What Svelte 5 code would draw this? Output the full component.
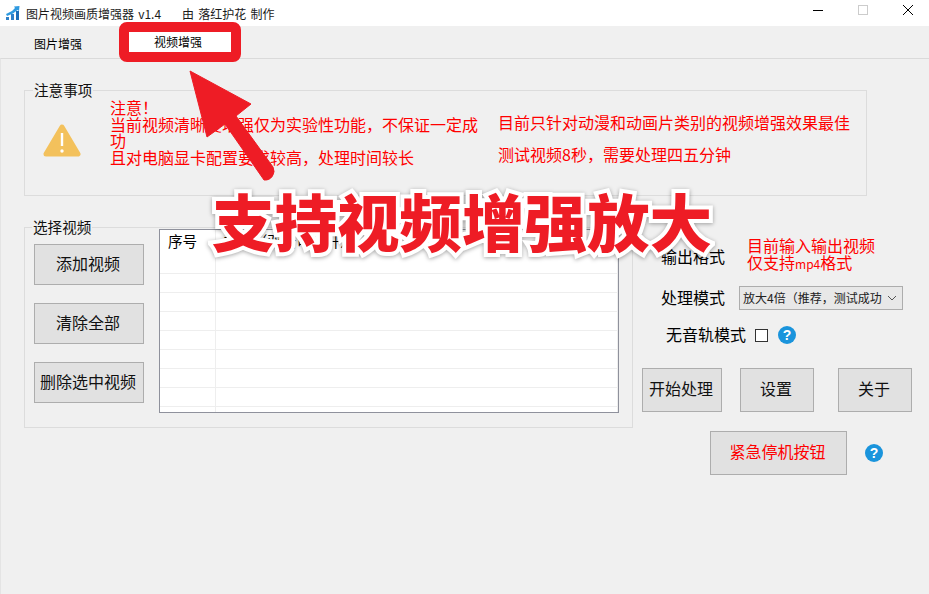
<script>
  const rows = Array.from({ length: 8 });
</script>

<div class="window">
  <header class="titlebar">
    <svg class="logo" viewBox="0 0 16 16" width="16" height="16" aria-hidden="true">
      <rect x="1" y="12" width="3" height="3" fill="#2f80c8" />
      <rect x="6" y="9" width="3" height="6" fill="#2f80c8" />
      <rect x="11" y="6" width="3" height="9" fill="#1c6db8" />
      <path d="M1 9 L7 6 L10 3 L9 1.5 L14.5 1 L14 6 L12.5 5 L8 8.5 L2 11 Z" fill="#2f9ae0" />
    </svg>
    <span class="title">图片视频画质增强器 v1.4</span>
    <span class="author">由 落红护花 制作</span>
    <div class="controls">
      <svg viewBox="0 0 10 10" width="10" height="10" aria-hidden="true"><path d="M0 5.5H10" stroke="#000" fill="none" /></svg>
      <svg viewBox="0 0 10 10" width="10" height="10" aria-hidden="true"><rect x="0.5" y="0.5" width="9" height="9" stroke="#ccc" fill="none" /></svg>
      <svg viewBox="0 0 10 10" width="10" height="10" aria-hidden="true"><path d="M0 0L10 10M10 0L0 10" stroke="#000" fill="none" /></svg>
    </div>
  </header>

  <nav class="tabs">
    <span class="tab">图片增强</span>
    <span class="tab active">视频增强</span>
  </nav>

  <main class="panel">
    <section class="group notice">
      <span class="legend">注意事项</span>
      <svg class="warn" viewBox="0 0 38 34" width="38" height="34" aria-hidden="true">
        <path d="M19 3 L35 30 H3 Z" fill="#f3c15c" stroke="#f3c15c" stroke-width="5" stroke-linejoin="round" />
        <path d="M19 9V22" stroke="#fff" stroke-width="2.4" />
        <circle cx="19" cy="27" r="1.7" fill="#fff" />
      </svg>
      <div class="red left-note">
        注意！<br />当前视频清晰度增强仅为实验性功能，不保证一定成功<br />且对电脑显卡配置要求较高，处理时间较长
      </div>
      <div class="red right-note">
        <p>目前只针对动漫和动画片类别的视频增强效果最佳</p>
        <p>测试视频8秒，需要处理四五分钟</p>
      </div>
    </section>

    <div class="lower">
      <section class="group picker">
        <span class="legend">选择视频</span>
        <div class="btn-col">
          <button class="btn">添加视频</button>
          <button class="btn">清除全部</button>
          <button class="btn">删除选中视频</button>
        </div>
        <div class="table-wrap">
          <table>
            <thead>
              <tr><th class="c1">序号</th><th>视频（双击可打开）</th></tr>
            </thead>
            <tbody>
              {#each rows as _}
                <tr><td class="c1"></td><td></td></tr>
              {/each}
            </tbody>
          </table>
        </div>
      </section>

      <aside class="side">
        <div class="row fmt">
          <span class="label">输出格式</span>
          <span class="red hint">目前输入输出视频<br />仅支持<span class="latin">mp4</span>格式</span>
        </div>
        <div class="row mode">
          <span class="label">处理模式</span>
          <div class="select">
            <span>放大4倍（推荐，测试成功</span>
            <svg viewBox="0 0 10 6" width="10" height="6" aria-hidden="true"><path d="M1 1L5 5L9 1" stroke="#555" fill="none" /></svg>
          </div>
        </div>
        <div class="row audio">
          <span class="label">无音轨模式</span>
          <span class="check"></span>
          <span class="help">?</span>
        </div>
        <div class="actions">
          <button class="btn start">开始处理</button>
          <button class="btn small">设置</button>
          <button class="btn small">关于</button>
        </div>
        <div class="stop">
          <button class="btn halt">紧急停机按钮</button>
          <span class="help">?</span>
        </div>
      </aside>
    </div>
  </main>

  <svg class="marks" viewBox="0 0 929 594" aria-hidden="true">
    <rect x="124" y="27" width="112" height="30" rx="3" fill="none" stroke="#ee1c25" stroke-width="10" />
    <path d="M190 71 L251 104 L236 116 L273 167 A9 9 0 0 1 264 180 L225 124 L207 137 Z" fill="#ee1c25" stroke="#ee1c25" stroke-linejoin="round" />
  </svg>
  <div class="headline">支持视频增强放大</div>
</div>

<style>
  :global(body) {
    margin: 0;
    background: #f0f0f0;
  }
  .window {
    position: relative;
    width: 929px;
    height: 594px;
    overflow: hidden;
    display: flex;
    flex-direction: column;
    font-family: "Noto Sans CJK SC", "Liberation Sans", sans-serif;
    color: #000;
    background: #f0f0f0;
  }
  .titlebar {
    height: 26px;
    flex: none;
    display: flex;
    align-items: center;
    background: #fff;
    font-size: 12px;
    color: #1a1a1a;
    word-spacing: 1.5px;
  }
  .logo {
    margin-left: 5px;
    margin-right: 5px;
  }
  .title {
    width: 156px;
  }
  .controls {
    margin-left: auto;
    margin-right: 16px;
    display: flex;
    gap: 35px;
    align-items: center;
    margin-top: -6px;
  }
  .tabs {
    height: 32px;
    flex: none;
    display: flex;
    align-items: center;
    font-size: 12px;
    padding-left: 34px;
    box-sizing: border-box;
  }
  .tab {
    width: 95px;
    margin-top: 2px;
  }
  .tab.active {
    position: relative;
    z-index: 1;
    margin: 0;
    width: 48px;
    height: 20px;
    line-height: 20px;
    background: #fff;
    padding: 0 29px 0 25px;
  }
  .panel {
    flex: 1;
    border-top: 1px solid #dadada;
    border-left: 1px solid #e4e4e4;
    padding: 31px 0 0 23px;
    font-size: 16px;
    line-height: 1.1;
  }
  .group {
    position: relative;
    box-sizing: border-box;
    border: 1px solid #dcdcdc;
  }
  .legend {
    position: absolute;
    top: -9px;
    left: 8px;
    padding: 0 1px;
    background: #f0f0f0;
    font-size: 14.6px;
    line-height: 16px;
    color: #111;
  }
  .picker .legend {
    left: 7px;
  }
  .notice {
    width: 843px;
    height: 106px;
    display: flex;
  }
  .red {
    color: #f00;
  }
  .warn {
    margin: 33px 0 0 18px;
    flex: none;
  }
  .left-note {
    width: 370px;
    margin: 8px 0 0 29px;
    line-height: 16.5px;
    flex: none;
  }
  .right-note {
    margin: 23px 0 0 18px;
    line-height: 16px;
  }
  .right-note p {
    margin: 0 0 16px;
    white-space: nowrap;
  }
  .lower {
    display: flex;
    margin-top: 31px;
    align-items: flex-start;
  }
  .picker {
    width: 609px;
    height: 201px;
    display: flex;
    align-items: flex-start;
    gap: 15px;
    padding-left: 9px;
  }
  .btn-col {
    display: flex;
    flex-direction: column;
    gap: 18px;
    margin-top: 16px;
  }
  .btn {
    box-sizing: border-box;
    height: 41px;
    width: 110px;
    padding: 0 2px 2px 0;
    background: #e1e1e1;
    border: 1px solid #adadad;
    font: inherit;
    font-size: 16px;
    color: #111;
  }
  .table-wrap {
    box-sizing: border-box;
    width: 460px;
    height: 184px;
    margin-top: 1px;
    background: #fff;
    border: 1px solid #8f919c;
    overflow: hidden;
  }
  table {
    width: 100%;
    border-collapse: collapse;
    table-layout: fixed;
    font-size: 14.6px;
  }
  th {
    height: 43px;
    padding: 3px 0 0 8px;
    box-sizing: border-box;
    text-align: left;
    vertical-align: top;
    font-weight: 400;
    border-bottom: 1px solid #eee;
    border-right: 1px solid #eee;
    line-height: 16px;
    white-space: nowrap;
  }
  td {
    height: 19px;
    padding: 0;
    box-sizing: border-box;
    border-bottom: 1px solid #eee;
    border-right: 1px solid #eee;
  }
  .c1 {
    width: 55px;
  }
  .side {
    margin-left: 9px;
    width: 270px;
    flex: none;
  }
  .row {
    display: flex;
    align-items: center;
  }
  .fmt {
    margin-top: 12px;
    height: 33px;
    padding-left: 19px;
  }
  .fmt .label {
    margin-top: 3px;
  }
  .hint {
    margin-left: 22px;
    margin-top: -2px;
    line-height: 17px;
    white-space: nowrap;
  }
  .latin {
    font-size: 12px;
  }
  .mode {
    margin-top: 14px;
    height: 24px;
    padding-left: 19px;
  }
  .select {
    margin-left: 14px;
    box-sizing: border-box;
    width: 164px;
    height: 24px;
    display: flex;
    align-items: center;
    justify-content: space-between;
    padding: 0 5px 0 3px;
    background: #e8e8e8;
    border: 1px solid #adadad;
    font-size: 12px;
    color: #222;
    white-space: nowrap;
  }
  .audio {
    margin-top: 13px;
    height: 24px;
    padding-left: 24px;
  }
  .check {
    box-sizing: border-box;
    width: 13px;
    height: 13px;
    margin-left: 9px;
    background: #fff;
    border: 1px solid #333;
  }
  .help {
    box-sizing: border-box;
    width: 18px;
    height: 18px;
    border-radius: 50%;
    background: #1a94dc;
    color: #fff;
    font-family: "Liberation Sans", sans-serif;
    font-size: 14px;
    font-weight: 700;
    line-height: 18px;
    text-align: center;
  }
  .audio .help {
    margin-left: 10px;
  }
  .actions {
    display: flex;
    gap: 18px;
    margin-top: 21px;
  }
  .actions .start {
    width: 80px;
    height: 44px;
  }
  .actions .small {
    width: 74px;
    height: 44px;
  }
  .actions .small:last-child {
    margin-left: 6px;
  }
  .stop {
    display: flex;
    align-items: center;
    gap: 18px;
    margin: 19px 0 0 68px;
  }
  .halt {
    width: 137px;
    height: 44px;
    color: #f00;
  }
  .marks {
    position: absolute;
    left: 0;
    top: 0;
    width: 929px;
    height: 594px;
    pointer-events: none;
  }
  .headline {
    position: absolute;
    left: 212px;
    top: 175px;
    font-size: 62.5px;
    line-height: 90px;
    font-weight: 900;
    color: #ee1c25;
    white-space: nowrap;
    -webkit-text-stroke: 8px #fff;
    paint-order: stroke fill;
    filter: drop-shadow(0 1px 2px rgba(0, 0, 0, 0.35));
  }
</style>
